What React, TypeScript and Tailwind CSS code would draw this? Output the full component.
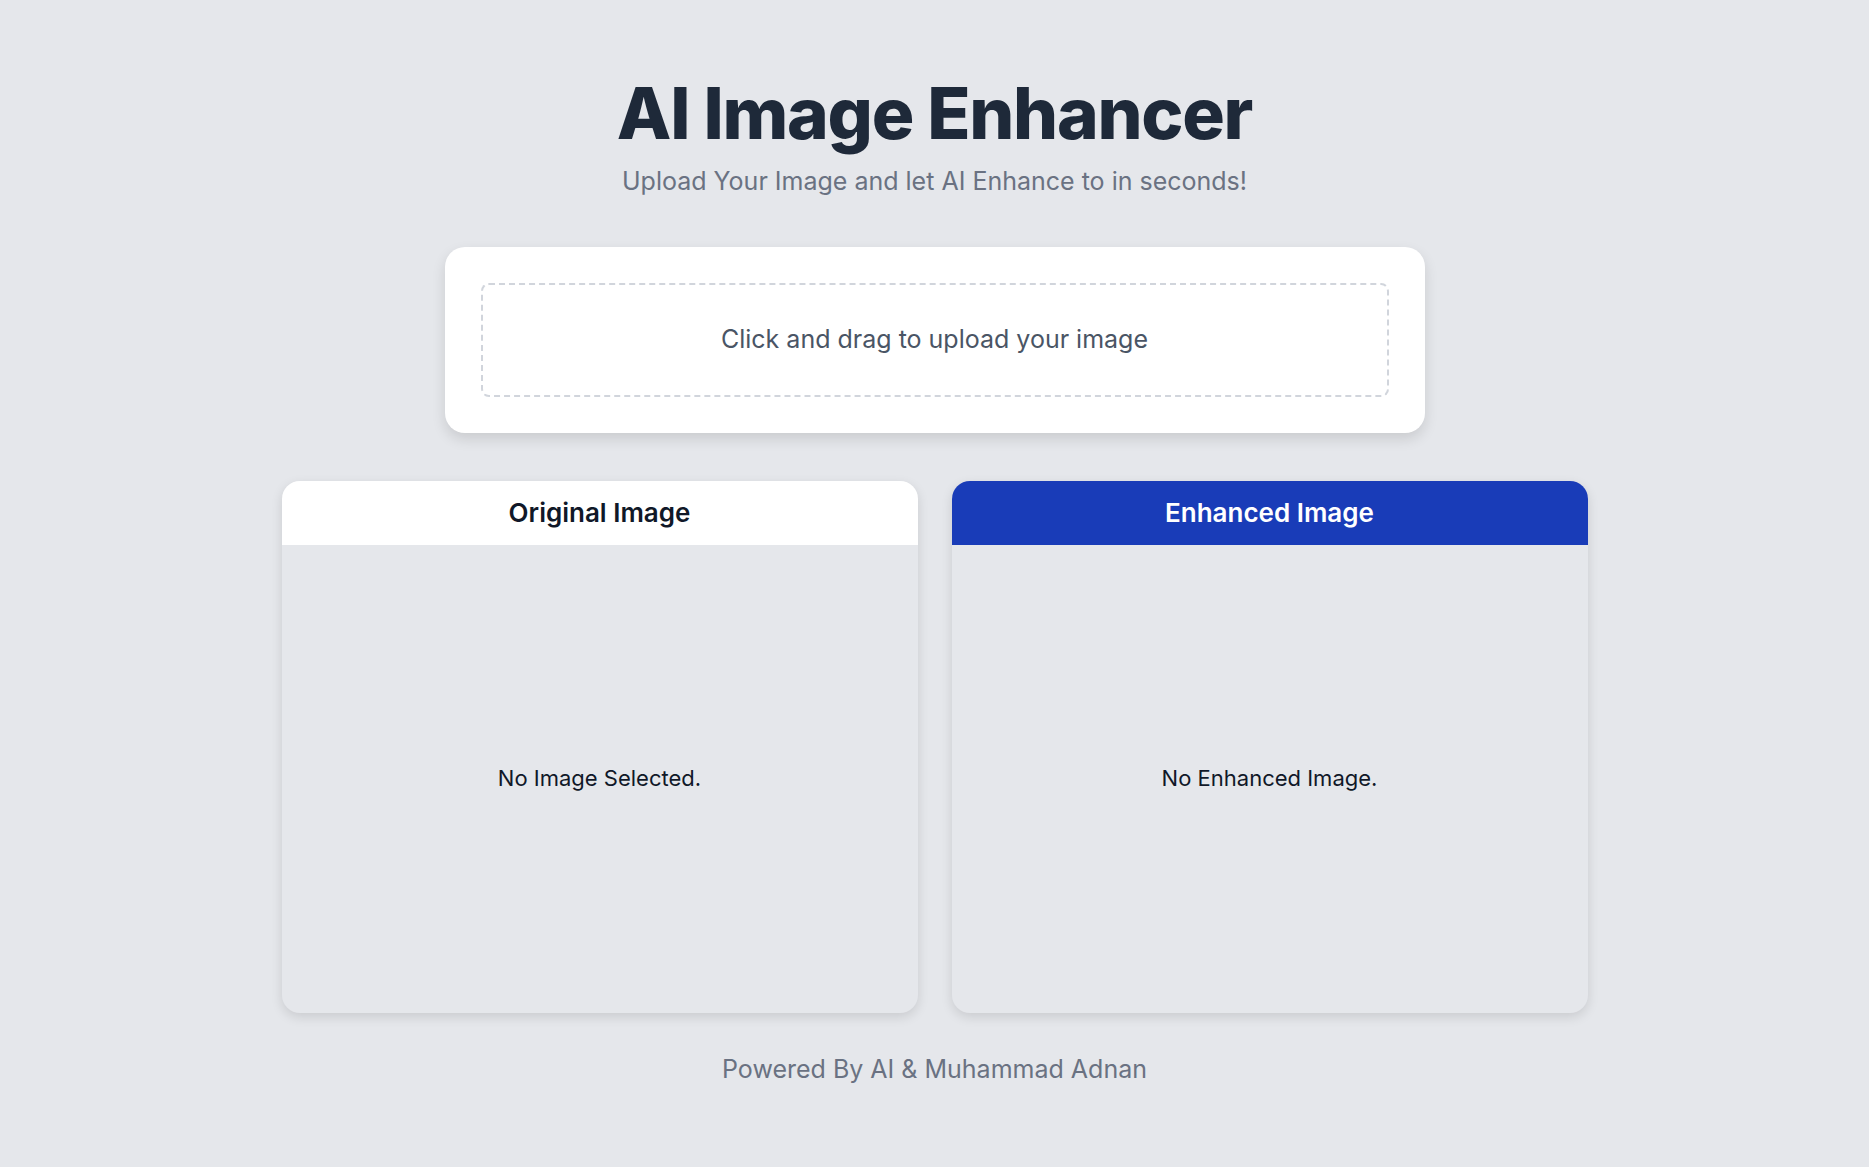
import React from 'react';

const Panel: React.FC<{ title: string; empty: string; accent?: boolean }> = ({ title, empty, accent }) => {
  return (
    <div className="flex flex-col w-[636px] h-[532px] rounded-[18px] overflow-hidden bg-gray-200 shadow-[0_4px_12px_rgba(0,0,0,0.12)]">
      <div
        className={`h-[64px] flex items-center justify-center text-[26px] font-semibold ${
          accent ? 'bg-blue-800 text-white' : 'bg-white text-gray-900'
        }`}
      >
        {title}
      </div>
      <div className="flex-1 flex items-center justify-center text-[22px] text-gray-900">{empty}</div>
    </div>
  );
};

const App: React.FC = () => {
  return (
    <div
      className="min-h-screen bg-gray-200 flex flex-col items-center pt-[78px]"
      style={{ fontFamily: 'Inter, "Noto Sans", sans-serif' }}
    >
      <h1 className="text-[71px] leading-none font-extrabold tracking-[-0.018em] text-gray-800">AI Image Enhancer</h1>
      <p className="mt-[14px] text-[25px] text-gray-500">Upload Your Image and let AI Enhance to in seconds!</p>

      {/* upload box */}
      <div className="mt-[46px] w-[980px] bg-white rounded-[20px] shadow-[0_6px_14px_rgba(0,0,0,0.12)] p-[36px]">
        <label className="h-[114px] flex items-center justify-center border-2 border-dashed border-gray-300 rounded-lg cursor-pointer text-[25px] text-gray-600">
          Click and drag to upload your image
          <input type="file" className="hidden" />
        </label>
      </div>

      <div className="mt-[48px] flex gap-[34px]">
        <Panel title="Original Image" empty="No Image Selected." />
        <Panel title="Enhanced Image" empty="No Enhanced Image." accent />
      </div>

      <p className="mt-[38px] text-[25px] text-gray-500">Powered By AI &amp; Muhammad Adnan</p>
    </div>
  );
};

export default App;
